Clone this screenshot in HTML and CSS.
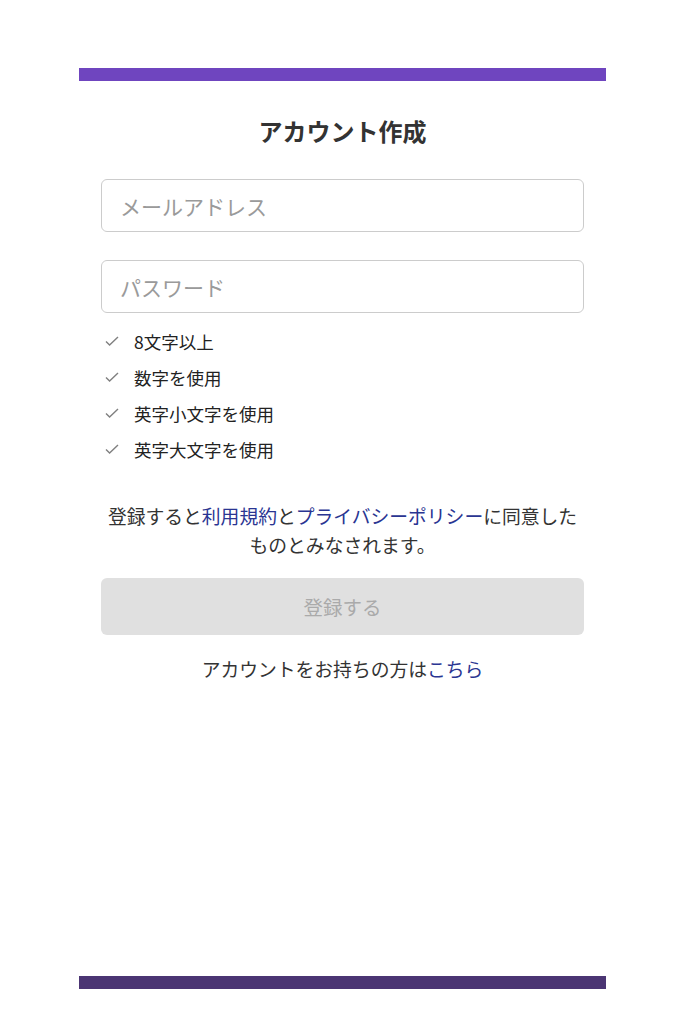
FILE: index.html
```html
<!DOCTYPE html>
<html lang="ja">
<head>
  <meta charset="UTF-8" />
  <meta name="viewport" content="width=device-width, initial-scale=1.0" />
  <title>アカウント作成</title>
  <link rel="stylesheet" href="styles.css">
</head>
<body>
  <!-- Signup Card -->
  <div class="signup">
    <div class="signup-bar"></div>
    <div class="signup-body">
      <h1>アカウント作成</h1>
      <input type="email" class="field" placeholder="メールアドレス" />
      <input type="password" class="field" placeholder="パスワード" />

      <!-- Password rules -->
      <ul class="rules">
        <li><svg viewBox="0 0 16 16"><path d="M2 8.5l3.6 3.6L14 4" /></svg>8文字以上</li>
        <li><svg viewBox="0 0 16 16"><path d="M2 8.5l3.6 3.6L14 4" /></svg>数字を使用</li>
        <li><svg viewBox="0 0 16 16"><path d="M2 8.5l3.6 3.6L14 4" /></svg>英字小文字を使用</li>
        <li><svg viewBox="0 0 16 16"><path d="M2 8.5l3.6 3.6L14 4" /></svg>英字大文字を使用</li>
      </ul>

      <p class="terms">登録すると<a href="#">利用規約</a>と<a href="#">プライバシーポリシー</a>に同意したものとみなされます。</p>

      <button class="submit" disabled>登録する</button>

      <p class="login-link">アカウントをお持ちの方は<a href="#">こちら</a></p>
    </div>
  </div>

  <!-- Footer bar -->
  <div class="footer-bar"></div>
</body>
</html>
```

FILE: styles.css
```css
/* Global Styles */
body {
  font-family: "Noto Sans CJK JP", "Noto Sans", sans-serif;
  margin: 0;
  padding: 0;
  min-height: 100vh;
  display: flex;
  flex-direction: column;
  background: #fff;
  color: #333;
}
a {
  color: #2a3592;
  text-decoration: none;
}
/* Signup Card */
.signup {
  width: 527px;
  margin: 68px 0 0 79px;
}
.signup-bar {
  height: 13px;
  background: #6f45bf;
}
.signup-body {
  padding: 0 22px;
  display: flex;
  flex-direction: column;
}
.signup-body h1 {
  text-align: center;
  font-size: 24px;
  font-weight: 700;
  margin: 32px 0 30px;
  line-height: 36px;
  color: #333;
}
.field {
  height: 53px;
  padding: 0 18px;
  border: 1.5px solid #ccc;
  border-radius: 6px;
  font-family: inherit;
  font-size: 21px;
  box-sizing: border-box;
  margin-bottom: 28px;
}
.field::placeholder {
  color: #9a9a9a;
}
.field + .field {
  margin-bottom: 10px;
}
/* Password rules */
.rules {
  list-style: none;
  padding: 0;
  margin: 0 0 34px;
}
.rules li {
  display: flex;
  align-items: center;
  height: 36px;
  font-size: 17.5px;
  color: #222;
}
.rules svg {
  width: 16px;
  height: 16px;
  margin: 0 14px 0 3px;
  fill: none;
  stroke: #808080;
  stroke-width: 1.4;
}
/* Terms */
.terms {
  text-align: center;
  font-size: 18.8px;
  line-height: 29px;
  margin: 0 0 19px;
  padding: 0 4px;
  color: #333;
}
.submit {
  height: 57px;
  border: none;
  border-radius: 6px;
  background: #e0e0e0;
  color: #aaa;
  font-family: inherit;
  font-size: 19.5px;
}
.login-link {
  text-align: center;
  font-size: 18.8px;
  margin: 20px 0 0;
  color: #333;
}
/* Footer bar */
.footer-bar {
  width: 527px;
  height: 13px;
  margin: auto 0 35px 79px;
  background: #4b3573;
}
```
